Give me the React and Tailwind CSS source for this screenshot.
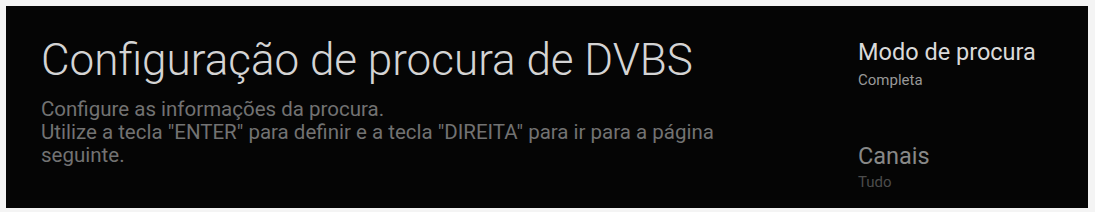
export default function App() {
  return (
    <div className="w-[1095px] h-[212px] bg-[#f4f4f4] pt-[6px] pl-[6px] pr-[7px] pb-[4px] font-['Roboto',sans-serif]">
      <div className="h-full bg-[#050505] flex pl-[35px]">
        <div className="w-[715px] pt-[28px]">
          <h1 className="text-[44px] leading-[52px] font-light text-[#d4d4d4]">
            Configuração de procura de DVBS
          </h1>
          <p className="mt-[12px] text-[20.5px] leading-[23px] text-[#727272]">
            Configure as informações da procura.
            <br />
            Utilize a tecla "ENTER" para definir e a tecla "DIREITA" para ir para a página seguinte.
          </p>
        </div>
        <div className="ml-[102px] pt-[32px] flex flex-col">
          <p className="text-[23.5px] leading-[28px] text-[#dadada]">Modo de procura</p>
          <p className="mt-[4px] text-[15px] leading-[20px] text-[#999999]">Completa</p>
          <p className="mt-[52px] text-[23.5px] leading-[28px] text-[#888888]">Canais</p>
          <p className="mt-[2px] text-[15px] leading-[20px] text-[#4c4c4c]">Tudo</p>
        </div>
      </div>
    </div>
  )
}
